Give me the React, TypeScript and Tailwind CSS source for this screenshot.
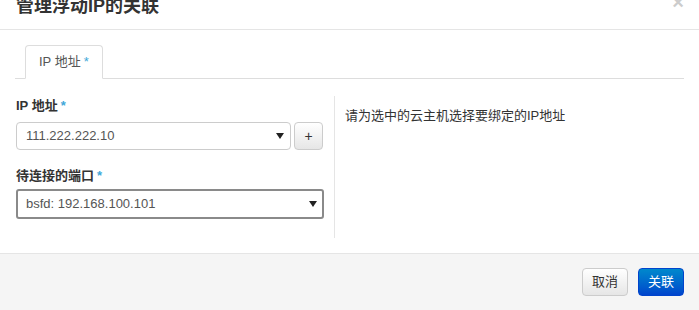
const FONT = "font-['Liberation_Sans','Noto_Sans_CJK_SC',sans-serif]";

function Req() {
  return <span className="text-[#3ea7d8] ml-[3px]">*</span>;
}

function Caret() {
  return (
    <svg width="8" height="6" viewBox="0 0 8 6" className="shrink-0">
      <path d="M0 0 H8 L4 6 Z" fill="#222" />
    </svg>
  );
}

export default function App() {
  return (
    <div className={`${FONT} w-[699px] h-[310px] bg-white text-[13px] text-[#333] overflow-hidden flex flex-col`}>
      {/* header */}
      <div className="h-[30px] shrink-0 border-b border-[#e5e5e5] flex items-start justify-between pl-[16px] pr-[15px]">
        <h3 className="-mt-[3px] text-[18px] leading-[18px] font-bold text-[#333]">管理浮动IP的关联</h3>
        <span className="-mt-[8px] text-[20px] leading-[20px] font-bold text-[#ccc]">×</span>
      </div>

      {/* body */}
      <div className="flex-1 px-[15px] pt-[15px] pb-[15px]">
        <div className="flex border-b border-[#ddd] pl-[10px]">
          <div className="h-[34px] -mb-px px-[13px] flex items-center bg-white border border-[#ddd] border-b-transparent rounded-t-[4px] text-[#555]">
            IP 地址<Req />
          </div>
        </div>

        <div className="flex pt-[17px]">
          <div className="w-[319px] pl-px pr-[10px] pb-[19px]">
            <label className="block h-[20px] leading-[20px] font-bold mb-[6px]">
              IP 地址<Req />
            </label>
            <div className="flex gap-[3px]">
              <div className="w-[275px] h-[28px] border border-[#ccc] rounded-[4px] bg-white flex items-center justify-between pl-[9px] pr-[6px] text-[#555]">
                <span>111.222.222.10</span>
                <Caret />
              </div>
              <div className="w-[29px] h-[28px] border border-[#ccc] rounded-[4px] bg-gradient-to-b from-white to-[#e6e6e6] flex items-center justify-center text-[14px] text-[#333]">
                +
              </div>
            </div>
            <label className="block h-[20px] leading-[20px] font-bold mt-[16px] mb-[3px]">
              待连接的端口<Req />
            </label>
            <div className="w-[308px] h-[30px] border-2 border-[#8a8a8a] rounded-[3px] bg-white flex items-center justify-between pl-[8px] pr-[5px] text-[#555]">
              <span>bsfd: 192.168.100.101</span>
              <Caret />
            </div>
          </div>
          <div className="border-l border-[#e5e5e5] pl-[10px] pt-[11px] leading-[18px]">
            请为选中的云主机选择要绑定的IP地址
          </div>
        </div>
      </div>

      {/* footer */}
      <div className="h-[58px] shrink-0 border-t border-[#e5e5e5] bg-[#f5f5f5] flex items-start justify-end gap-[10px] pr-[15px] pt-[14px]">
        <button className="h-[28px] px-[9px] border border-[#ccc] rounded-[4px] bg-gradient-to-b from-white to-[#e6e6e6] text-[#333] text-[13px]">
          取消
        </button>
        <button className="h-[28px] px-[9px] border border-[#0044cc] rounded-[4px] bg-gradient-to-b from-[#0088cc] to-[#0044cc] text-white text-[13px]">
          关联
        </button>
      </div>
    </div>
  );
}
